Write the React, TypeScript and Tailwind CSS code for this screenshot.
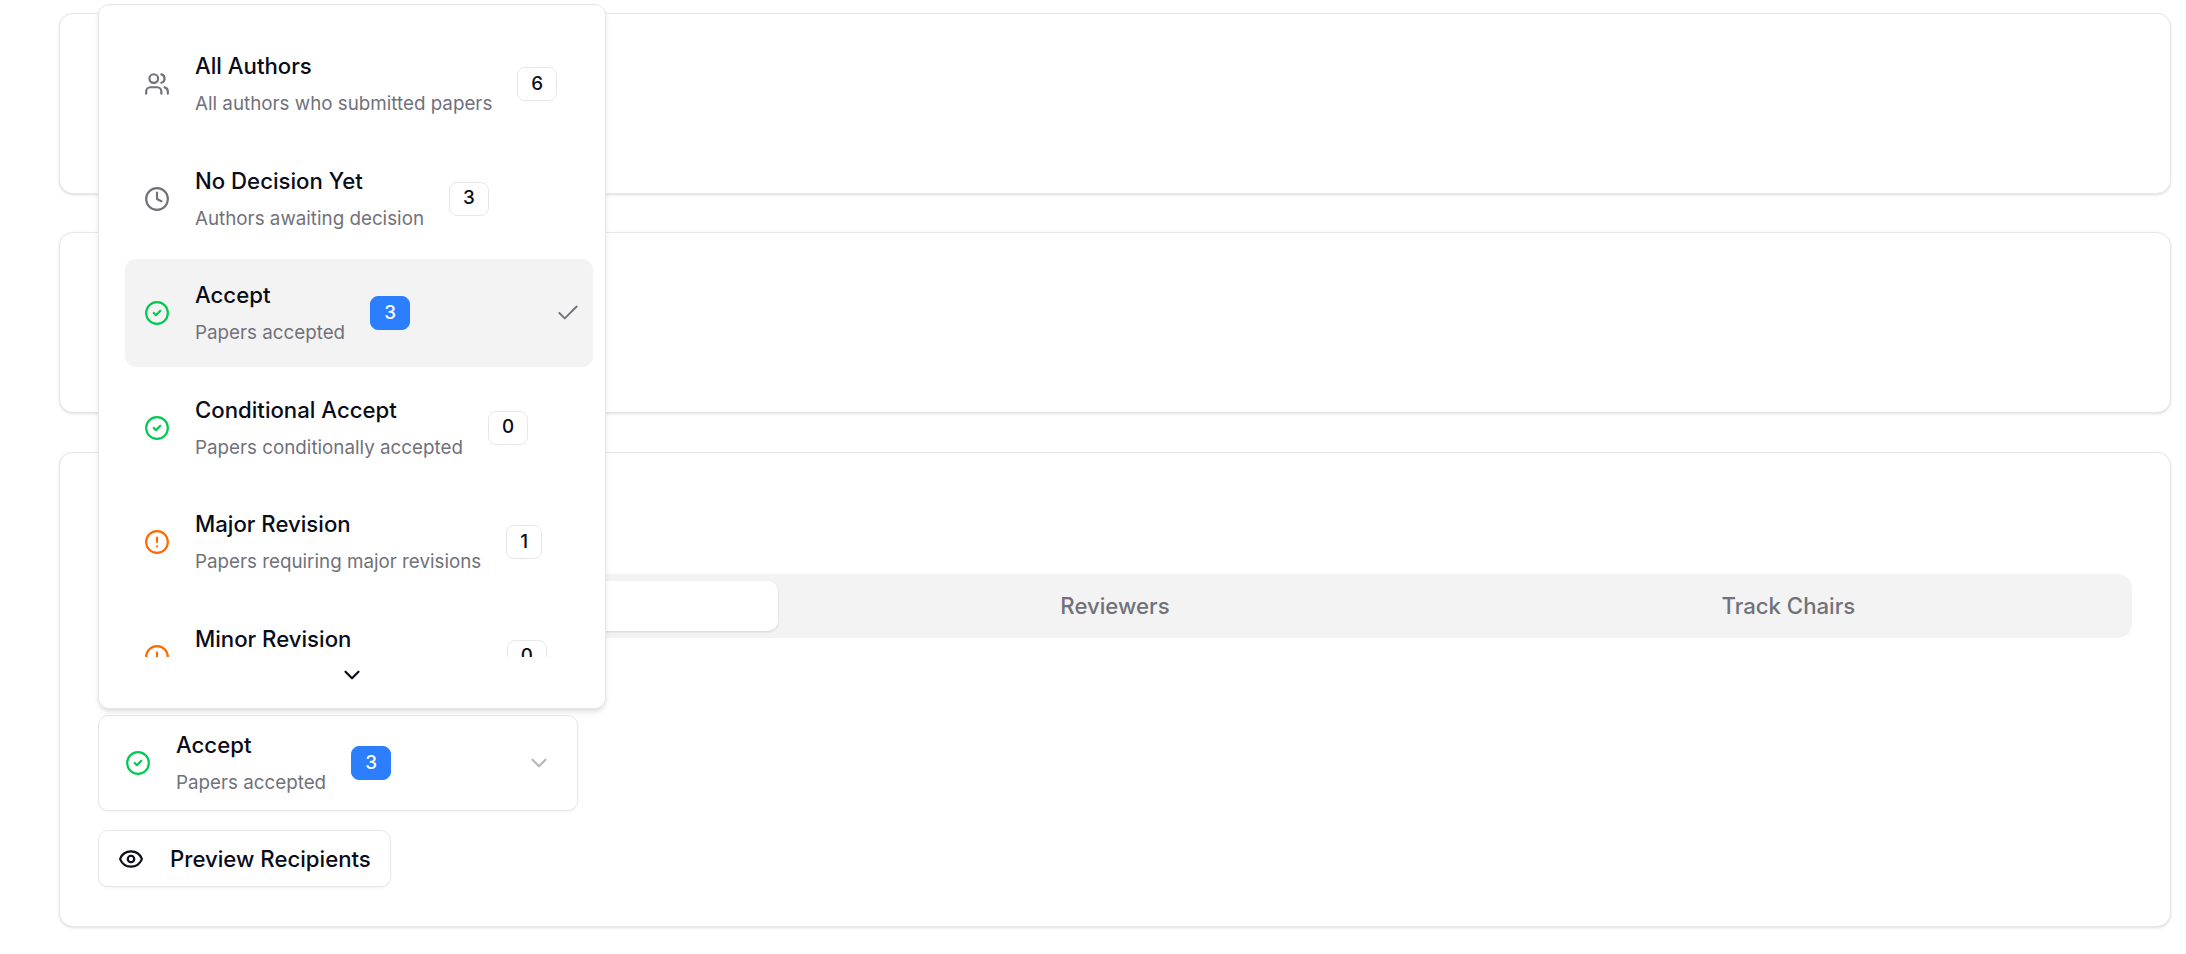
import { AlertCircle, Check, CheckCircle2, ChevronDown, Clock, Eye, Users } from "lucide-react"
import type { ReactNode } from "react"

const options = [
  { title: "All Authors", sub: "All authors who submitted papers", count: 6, icon: <Users className="size-[26px] text-zinc-500" /> },
  { title: "No Decision Yet", sub: "Authors awaiting decision", count: 3, icon: <Clock className="size-[26px] text-zinc-500" /> },
  { title: "Accept", sub: "Papers accepted", count: 3, selected: true, icon: <CheckCircle2 className="size-[26px] text-green-500" /> },
  { title: "Conditional Accept", sub: "Papers conditionally accepted", count: 0, icon: <CheckCircle2 className="size-[26px] text-green-500" /> },
  { title: "Major Revision", sub: "Papers requiring major revisions", count: 1, icon: <AlertCircle className="size-[26px] text-orange-500" /> },
  { title: "Minor Revision", sub: "Papers requiring minor revisions", count: 0, icon: <AlertCircle className="size-[26px] text-orange-500" /> },
]

function Badge({ count, blue }: { count: number; blue?: boolean }) {
  return (
    <span
      className={
        blue
          ? "flex h-[34px] items-center justify-center rounded-[8px] border border-blue-500 bg-blue-500 px-[13px] text-[18.8px] font-medium text-white"
          : "flex h-[34px] items-center justify-center rounded-[8px] border border-gray-200 bg-white px-[13px] text-[18.8px] font-medium text-[#0a0c18]"
      }
    >
      {count}
    </span>
  )
}

function OptionBody({ icon, title, sub, count, blue }: { icon: ReactNode; title: string; sub: string; count: number; blue?: boolean }) {
  return (
    <div className="flex items-center">
      <span className="flex w-[26px] shrink-0 justify-center">{icon}</span>
      <div className="ml-[25px] flex flex-col items-start gap-[12px]">
        <span className="text-[22.2px] leading-[28px] font-medium text-[#0a0c18]">{title}</span>
        <span className="text-[18.8px] leading-[24px] text-zinc-500">{sub}</span>
      </div>
      <span className="ml-[25px]">
        <Badge count={count} blue={blue} />
      </span>
    </div>
  )
}

function Card({ className, children }: { className: string; children?: ReactNode }) {
  return <div className={`rounded-[14px] border border-gray-200 bg-white shadow-sm ${className}`}>{children}</div>
}

export default function App() {
  return (
    <div className="flex h-[954px] flex-col overflow-hidden bg-white pt-[13px] pr-[15px] pl-[59px] font-['Inter',sans-serif]">
      <Card className="h-[181px] shrink-0" />
      <Card className="mt-[38px] h-[181px] shrink-0" />
      <Card className="mt-[39px] shrink-0 px-[38px] pt-[121px] pb-[39px]">
        <div className="grid h-[64px] grid-cols-3 rounded-[14px] bg-[#f3f3f3] p-[7px]">
          <div className="rounded-[10px] bg-white shadow-sm" />
          <div className="flex items-center justify-center text-[22.2px] font-medium text-zinc-500">Reviewers</div>
          <div className="flex items-center justify-center text-[22.2px] font-medium text-zinc-500">Track Chairs</div>
        </div>

        <div className="relative mt-[77px] w-[480px]">
          <button className="flex h-[96px] w-full items-center justify-between rounded-[10px] border border-gray-200 bg-white pr-[25px] pl-[26px] shadow-xs">
            <OptionBody
              icon={<CheckCircle2 className="size-[26px] text-green-500" />}
              title="Accept"
              sub="Papers accepted"
              count={3}
              blue
            />
            <ChevronDown className="size-[26px] text-zinc-500 opacity-50" />
          </button>

          <div className="absolute bottom-full left-0 mb-[6px] flex h-[705px] w-[508px] flex-col rounded-[11px] border border-gray-200 bg-white shadow-md">
            <div className="flex h-[652px] flex-col gap-[6.5px] overflow-hidden pt-[25px] pr-[12px] pl-[26px]">
              {options.map((o) => (
                <div
                  key={o.title}
                  className={`relative flex h-[108px] shrink-0 items-center rounded-[11px] pl-[19px] ${o.selected ? "bg-[#f3f3f3]" : ""}`}
                >
                  <OptionBody icon={o.icon} title={o.title} sub={o.sub} count={o.count} blue={o.selected} />
                  {o.selected && <Check className="absolute right-[12px] size-[26px] text-zinc-500" strokeWidth={1.7} />}
                </div>
              ))}
            </div>
            <div className="flex flex-1 items-start justify-center pt-[5px]">
              <ChevronDown className="size-[26px] text-[#0a0c18]" />
            </div>
          </div>
        </div>

        <button className="mt-[19px] flex h-[57px] w-[293px] items-center gap-[26px] rounded-[10px] border border-gray-200 bg-white pl-[19px] text-[22.2px] font-medium text-[#0a0c18] shadow-xs">
          <Eye className="size-[26px]" />
          Preview Recipients
        </button>
      </Card>
    </div>
  )
}
